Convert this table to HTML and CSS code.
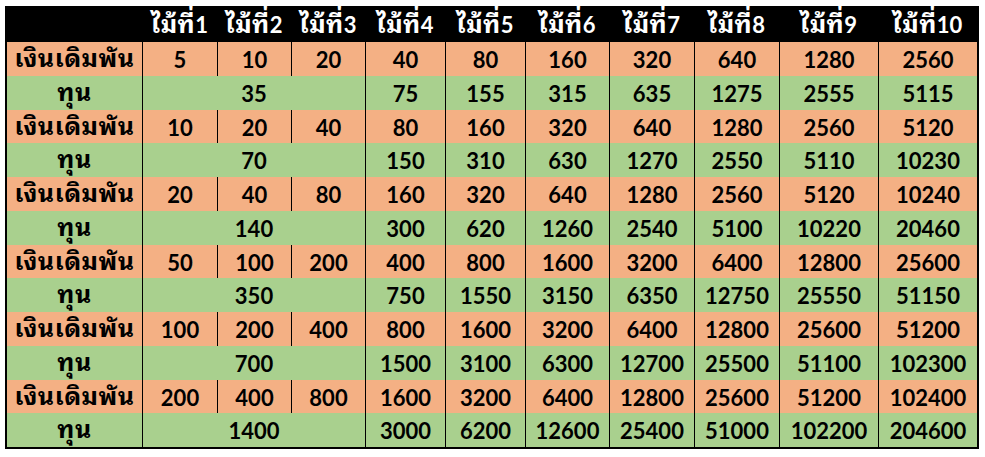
FILE: index.html
```html
<!DOCTYPE html>
<html lang="th">
<head>
<meta charset="utf-8">
<title>ตารางเงินเดิมพัน</title>
<link rel="stylesheet" href="styles.css">
</head>
<body>
<div class="sheet">
  <div class="grid">
    <div class="c h first"></div>
    <div class="c h"><span class="th">ไม้ที่</span>1</div>
    <div class="c h"><span class="th">ไม้ที่</span>2</div>
    <div class="c h"><span class="th">ไม้ที่</span>3</div>
    <div class="c h"><span class="th">ไม้ที่</span>4</div>
    <div class="c h"><span class="th">ไม้ที่</span>5</div>
    <div class="c h"><span class="th">ไม้ที่</span>6</div>
    <div class="c h"><span class="th">ไม้ที่</span>7</div>
    <div class="c h"><span class="th">ไม้ที่</span>8</div>
    <div class="c h"><span class="th">ไม้ที่</span>9</div>
    <div class="c h"><span class="th">ไม้ที่</span>10</div>

    <div class="c o first"><span class="th">เงินเดิมพัน</span></div>
    <div class="c o">5</div><div class="c o">10</div><div class="c o">20</div><div class="c o">40</div><div class="c o">80</div><div class="c o">160</div><div class="c o">320</div><div class="c o">640</div><div class="c o">1280</div><div class="c o">2560</div>
    <div class="c g first"><span class="th">ทุน</span></div>
    <div class="c g span3">35</div><div class="c g">75</div><div class="c g">155</div><div class="c g">315</div><div class="c g">635</div><div class="c g">1275</div><div class="c g">2555</div><div class="c g">5115</div>

    <div class="c o first"><span class="th">เงินเดิมพัน</span></div>
    <div class="c o">10</div><div class="c o">20</div><div class="c o">40</div><div class="c o">80</div><div class="c o">160</div><div class="c o">320</div><div class="c o">640</div><div class="c o">1280</div><div class="c o">2560</div><div class="c o">5120</div>
    <div class="c g first"><span class="th">ทุน</span></div>
    <div class="c g span3">70</div><div class="c g">150</div><div class="c g">310</div><div class="c g">630</div><div class="c g">1270</div><div class="c g">2550</div><div class="c g">5110</div><div class="c g">10230</div>

    <div class="c o first"><span class="th">เงินเดิมพัน</span></div>
    <div class="c o">20</div><div class="c o">40</div><div class="c o">80</div><div class="c o">160</div><div class="c o">320</div><div class="c o">640</div><div class="c o">1280</div><div class="c o">2560</div><div class="c o">5120</div><div class="c o">10240</div>
    <div class="c g first"><span class="th">ทุน</span></div>
    <div class="c g span3">140</div><div class="c g">300</div><div class="c g">620</div><div class="c g">1260</div><div class="c g">2540</div><div class="c g">5100</div><div class="c g">10220</div><div class="c g">20460</div>

    <div class="c o first"><span class="th">เงินเดิมพัน</span></div>
    <div class="c o">50</div><div class="c o">100</div><div class="c o">200</div><div class="c o">400</div><div class="c o">800</div><div class="c o">1600</div><div class="c o">3200</div><div class="c o">6400</div><div class="c o">12800</div><div class="c o">25600</div>
    <div class="c g first"><span class="th">ทุน</span></div>
    <div class="c g span3">350</div><div class="c g">750</div><div class="c g">1550</div><div class="c g">3150</div><div class="c g">6350</div><div class="c g">12750</div><div class="c g">25550</div><div class="c g">51150</div>

    <div class="c o first"><span class="th">เงินเดิมพัน</span></div>
    <div class="c o">100</div><div class="c o">200</div><div class="c o">400</div><div class="c o">800</div><div class="c o">1600</div><div class="c o">3200</div><div class="c o">6400</div><div class="c o">12800</div><div class="c o">25600</div><div class="c o">51200</div>
    <div class="c g first"><span class="th">ทุน</span></div>
    <div class="c g span3">700</div><div class="c g">1500</div><div class="c g">3100</div><div class="c g">6300</div><div class="c g">12700</div><div class="c g">25500</div><div class="c g">51100</div><div class="c g">102300</div>

    <div class="c o first"><span class="th">เงินเดิมพัน</span></div>
    <div class="c o">200</div><div class="c o">400</div><div class="c o">800</div><div class="c o">1600</div><div class="c o">3200</div><div class="c o">6400</div><div class="c o">12800</div><div class="c o">25600</div><div class="c o">51200</div><div class="c o">102400</div>
    <div class="c g first"><span class="th">ทุน</span></div>
    <div class="c g span3">1400</div><div class="c g">3000</div><div class="c g">6200</div><div class="c g">12600</div><div class="c g">25400</div><div class="c g">51000</div><div class="c g">102200</div><div class="c g">204600</div>
  </div>
</div>
</body>
</html>
```

FILE: styles.css
```css
html, body {
  margin: 0;
  padding: 0;
  background: #ffffff;
}

.sheet {
  padding: 6px 0 0 5px;
}

.grid {
  display: grid;
  width: max-content;
  grid-template-columns: 135px 75px 74px 74px 80px 80px 84px 85px 85px 99px 99px;
  grid-template-rows: 34px repeat(12, 33.75px);
  border: 2px solid #000000;
  background: #000000;
  font-family: "Lato", "Noto Sans Thai Looped", "Noto Sans", sans-serif;
  font-weight: 700;
  font-size: 22px;
  color: #000000;
}

.c {
  box-sizing: border-box;
  display: block;
  text-align: center;
  border-left: 1px solid #000000;
  white-space: nowrap;
  padding-top: 1px;
  line-height: 33px;
}

.c.first {
  border-left: none;
}

.th {
  font-family: "Noto Sans Thai Looped", "Noto Sans", sans-serif;
  font-size: 25px;
  letter-spacing: 0.5px;
  line-height: 1;
  vertical-align: 1px;
}

.h {
  background: #000000;
  color: #ffffff;
  border-left: none;
  padding-top: 0;
  line-height: 34px;
}

.h .th {
  vertical-align: 0;
}

.o {
  background: #f4b084;
}

.g {
  background: #a9d08e;
}

.span3 {
  grid-column: span 3;
}
```
